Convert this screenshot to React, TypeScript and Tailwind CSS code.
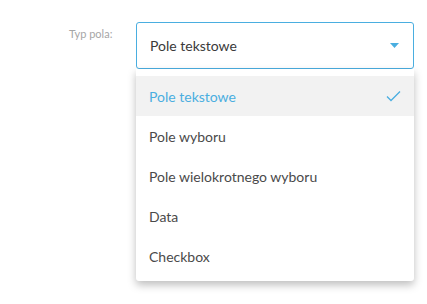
import { useState } from "react";

const options = [
  "Pole tekstowe",
  "Pole wyboru",
  "Pole wielokrotnego wyboru",
  "Data",
  "Checkbox",
];

export default function App() {
  const [value, setValue] = useState(options[0]);

  return (
    <div
      className="min-h-screen bg-white pl-[69px] pt-[22px]"
      style={{ fontFamily: "Lato, 'Open Sans', sans-serif" }}
    >
      <div className="flex items-start">
        <label className="w-[67px] pt-[4px] text-[11px] leading-[16px] text-[#a6a6a6]">
          Typ pola:
        </label>

        <div className="relative w-[278px]">
          {/* Select box */}
          <button className="flex h-[47px] w-full items-center justify-between rounded-[3px] border border-[#4aaee0] bg-white pl-[13px] pr-[13px] text-left">
            <span className="text-[14px] text-[#3a3a3a]">{value}</span>
            <svg width="9" height="5" viewBox="0 0 9 5" className="mr-[1px]">
              <path d="M0 0 L9 0 L4.5 5 Z" fill="#4aaee0" />
            </svg>
          </button>

          {/* Dropdown menu */}
          <ul className="absolute left-0 right-0 top-[47px] rounded-b-[3px] bg-white pt-[7px] pb-[5px] shadow-[0_4px_9px_rgba(0,0,0,0.26)]">
            {options.map((opt) => {
              const active = opt === value;
              return (
                <li
                  key={opt}
                  onClick={() => setValue(opt)}
                  className={`flex h-10 items-center justify-between pl-[13px] pr-[13px] text-[14px] ${
                    active ? "bg-[#f2f2f2] text-[#4aaee0]" : "text-[#4a4a4a]"
                  }`}
                >
                  <span>{opt}</span>
                  {active && (
                    <svg width="15" height="12" viewBox="0 0 15 12">
                      <path
                        d="M1 6.5 L5 10.5 L14 1.5"
                        fill="none"
                        stroke="#4aaee0"
                        strokeWidth="1.3"
                      />
                    </svg>
                  )}
                </li>
              );
            })}
          </ul>
        </div>
      </div>
    </div>
  );
}
